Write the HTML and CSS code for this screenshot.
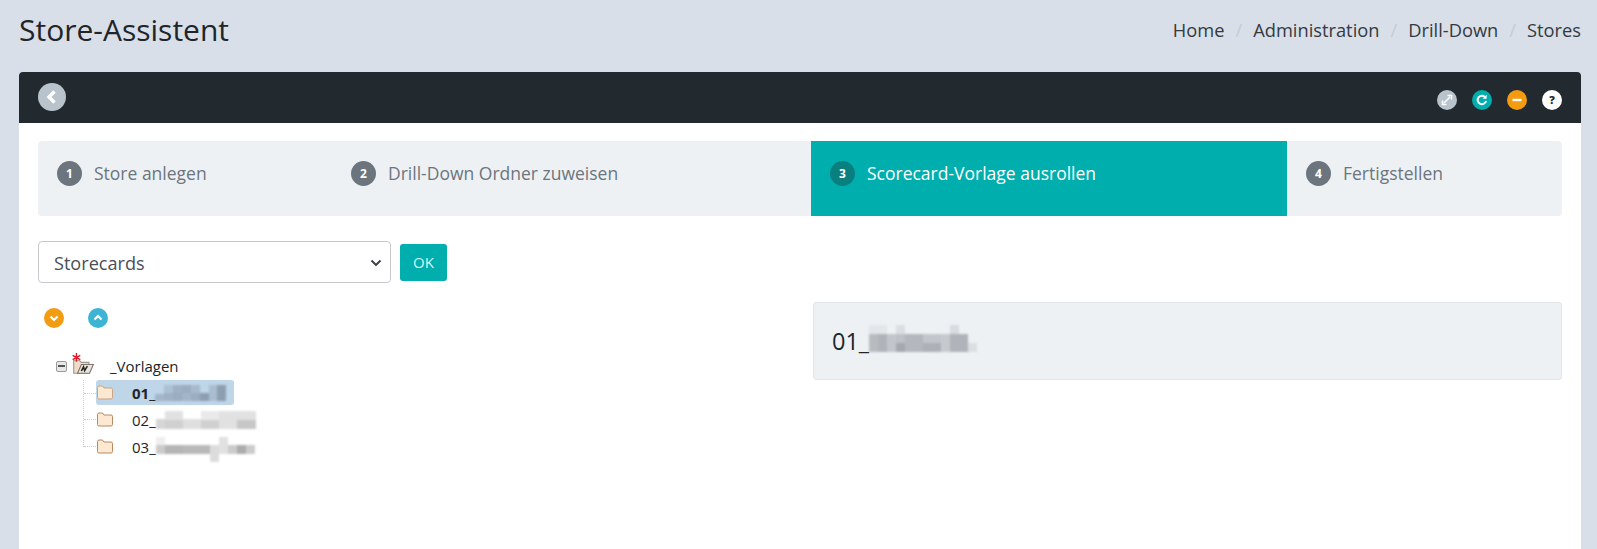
FILE: index.html
```html
<!DOCTYPE html>
<html lang="de">
<head>
<meta charset="utf-8">
<title>Store-Assistent</title>
<link rel="stylesheet" href="styles.css">
</head>
<body>
<header class="page-head">
  <h1 class="page-title">Store-Assistent</h1>
  <nav class="crumbs">
    <span>Home</span><i>/</i><span>Administration</span><i>/</i><span>Drill-Down</span><i>/</i><span>Stores</span>
  </nav>
</header>
<main class="card">
  <div class="card-bar">
    <span class="back">
      <svg viewBox="0 0 28 28" width="28" height="28"><path d="M16.500 8.500 11 14l5.500 5.500" fill="none" stroke="#fff" stroke-width="3.400"/></svg>
    </span>
    <div class="tools">
      <span class="tool t-grey"><svg viewBox="0 0 20 20" width="20" height="20"><path d="M7 13l6-6M10.500 5.500h4v4M5.500 10.500v4h4" fill="none" stroke="#fff" stroke-width="1.500"/></svg></span>
      <span class="tool t-teal"><svg viewBox="0 0 20 20" width="20" height="20"><path d="M13.500 7.500a4.300 4.300 0 1 0 .6 3.600" fill="none" stroke="#fff" stroke-width="2"/><path d="M14.600 4.800v4h-4z" fill="#fff"/></svg></span>
      <span class="tool t-orange"><svg viewBox="0 0 20 20" width="20" height="20"><rect x="5.500" y="8.800" width="9" height="2.400" fill="#fff"/></svg></span>
      <span class="tool t-white">?</span>
    </div>
  </div>
  <div class="card-body">
    <ol class="steps">
      <li class="step s1"><b>1</b>Store anlegen</li>
      <li class="step s2"><b>2</b>Drill-Down Ordner zuweisen</li>
      <li class="step s3 active"><b>3</b>Scorecard-Vorlage ausrollen</li>
      <li class="step s4"><b>4</b>Fertigstellen</li>
    </ol>
    <div class="picker">
      <div class="fake-select">Storecards
        <svg viewBox="0 0 12 8" width="12" height="8"><path d="M1.500 1.500 6 6l4.500-4.500" fill="none" stroke="#343a40" stroke-width="1.800"/></svg>
      </div>
      <button class="ok">OK</button>
    </div>
    <div class="columns">
      <section class="tree-col">
        <div class="round-btns">
          <span class="rb rb-orange"><svg viewBox="0 0 20 20" width="20" height="20"><path d="M6.500 8.500 10 12l3.500-3.500" fill="none" stroke="#fff" stroke-width="2.200"/></svg></span>
          <span class="rb rb-blue"><svg viewBox="0 0 20 20" width="20" height="20"><path d="M6.500 11.500 10 8l3.500 3.500" fill="none" stroke="#fff" stroke-width="2.200"/></svg></span>
        </div>
        <div class="tree">
          <div class="node root">
            <span class="minus"></span>
            <svg class="root-ico" viewBox="0 0 22 20" width="24" height="22">
              <path d="M2.500 6.500h5l2 2h7l-1 10h-13z" fill="#f0dcc8" stroke="#a09488"/>
              <path d="M6 18.500l3.500-8h11l-3.500 8z" fill="#ece6de" stroke="#7d746b"/>
              <path d="M9.500 16.500l2-4 1 3.500 2.500-4" fill="none" stroke="#222" stroke-width="1.400"/>
              <path d="M5 0v8M1.500 2l7 4M8.500 2l-7 4" stroke="#e0192a" stroke-width="1.300"/>
            </svg>
            <span class="root-label">_Vorlagen</span>
          </div>
          <div class="children">
            <div class="node selected">
              <svg class="folder" viewBox="0 0 18 15" width="18" height="15"><path d="M1.500 2.500q0-1.500 1.500-1.500h3.500l1.500 2h7q1.500 0 1.500 1.500v8q0 1.500-1.500 1.500H3q-1.500 0-1.500-1.500z" fill="#fde8d2" stroke="#c9a584"/></svg><span class="lbl bold">01_</span>
              <svg class="blur" viewBox="0 0 72 16" width="72" height="16"><g fill="#8b9bae"><rect x="0" y="9" width="9" height="7" opacity=".55"/><rect x="9" y="0" width="9" height="8" opacity=".35"/><rect x="9" y="8" width="9" height="8" opacity=".6"/><rect x="18" y="0" width="9" height="8" opacity=".6"/><rect x="18" y="8" width="9" height="8" opacity=".7"/><rect x="27" y="0" width="9" height="8" opacity=".7"/><rect x="27" y="8" width="9" height="8" opacity=".55"/><rect x="36" y="0" width="9" height="8" opacity=".45"/><rect x="36" y="8" width="9" height="8" opacity=".7"/><rect x="45" y="8" width="9" height="8" opacity=".95"/><rect x="54" y="0" width="8" height="16" opacity=".4"/><rect x="62" y="0" width="9" height="16" opacity=".95"/></g></svg>
            </div>
            <div class="node">
              <svg class="folder" viewBox="0 0 18 15" width="18" height="15"><path d="M1.500 2.500q0-1.500 1.500-1.500h3.500l1.500 2h7q1.500 0 1.500 1.500v8q0 1.500-1.500 1.500H3q-1.500 0-1.500-1.500z" fill="#fde8d2" stroke="#b58a63"/></svg><span class="lbl">02_</span>
              <svg class="blur" viewBox="0 0 100 18" width="100" height="18"><g fill="#c4c4c4"><rect x="0" y="8" width="9" height="10" opacity=".7"/><rect x="9" y="0" width="18" height="9" opacity=".5"/><rect x="9" y="9" width="18" height="9" opacity=".8"/><rect x="27" y="8" width="18" height="10" opacity=".55"/><rect x="45" y="0" width="18" height="9" opacity=".35"/><rect x="45" y="9" width="18" height="9" opacity=".8"/><rect x="63" y="0" width="18" height="18" opacity=".5"/><rect x="81" y="0" width="19" height="9" opacity=".5"/><rect x="81" y="9" width="19" height="9" opacity=".95"/></g></svg>
            </div>
            <div class="node">
              <svg class="folder" viewBox="0 0 18 15" width="18" height="15"><path d="M1.500 2.500q0-1.500 1.500-1.500h3.500l1.500 2h7q1.500 0 1.500 1.500v8q0 1.500-1.500 1.500H3q-1.500 0-1.500-1.500z" fill="#fde8d2" stroke="#b58a63"/></svg><span class="lbl">03_</span>
              <svg class="blur tall" viewBox="0 0 100 25" width="100" height="25"><g fill="#a8a8a8"><rect x="0" y="8" width="9" height="9" opacity=".6"/><rect x="0" y="0" width="9" height="8" opacity=".2"/><rect x="9" y="8" width="18" height="9" opacity=".85"/><rect x="27" y="8" width="27" height="9" opacity=".8"/><rect x="54" y="8" width="9" height="17" opacity=".4"/><rect x="63" y="0" width="9" height="17" opacity=".35"/><rect x="72" y="8" width="9" height="9" opacity=".6"/><rect x="81" y="8" width="9" height="9" opacity=".95"/><rect x="90" y="8" width="9" height="9" opacity=".6"/></g></svg>
            </div>
          </div>
        </div>
      </section>
      <aside class="info-col">
        <div class="well"><span>01_</span>
          <svg class="blur" viewBox="0 0 108 29" width="108" height="29"><g fill="#a5a9af"><rect x="0" y="9" width="9" height="18" opacity=".75"/><rect x="0" y="0" width="18" height="9" opacity=".15"/><rect x="9" y="9" width="9" height="18" opacity=".85"/><rect x="18" y="9" width="9" height="18" opacity=".6"/><rect x="27" y="0" width="9" height="9" opacity=".25"/><rect x="27" y="9" width="9" height="9" opacity=".65"/><rect x="27" y="18" width="9" height="9" opacity="1"/><rect x="36" y="9" width="18" height="18" opacity=".8"/><rect x="54" y="9" width="18" height="9" opacity=".6"/><rect x="54" y="18" width="18" height="9" opacity=".9"/><rect x="72" y="9" width="9" height="18" opacity=".55"/><rect x="81" y="0" width="9" height="9" opacity=".3"/><rect x="81" y="9" width="18" height="18" opacity=".85"/><rect x="99" y="18" width="9" height="9" opacity=".25"/></g></svg>
        </div>
      </aside>
    </div>
  </div>
</main>
</body>
</html>
```
FILE: styles.css
```css
* { box-sizing: border-box; }
html, body { height: 100%; }
body {
  margin: 0;
  background: #d8dfe8;
  color: #212529;
  font-family: "Open Sans", sans-serif;
  font-size: 16px;
  overflow: hidden;
}
.page-head {
  height: 72px;
  padding: 8px 16px 0 19px;
  display: flex;
  justify-content: space-between;
  align-items: flex-start;
}
.page-title {
  margin: 0;
  font-size: 30px;
  font-weight: 400;
  line-height: 44px;
}
.crumbs {
  display: flex;
  font-size: 18.300px;
  line-height: 44px;
  color: #343a40;
}
.crumbs i {
  font-style: normal;
  color: #c5ccd4;
  padding: 0 11px;
}
.card {
  margin: 0 16px 0 19px;
  background: #fff;
  border-radius: 4px 4px 0 0;
  height: 477px;
}
.card-bar {
  height: 51px;
  background: #22292f;
  border-radius: 4px 4px 0 0;
  padding: 11px 19px 0;
  display: flex;
  justify-content: space-between;
}
.back {
  width: 28px;
  height: 28px;
  border-radius: 50%;
  background: #b9c3cb;
  display: block;
}
.back svg { display: block; }
.tools {
  display: flex;
  gap: 15px;
  padding-top: 7px;
}
.tool {
  width: 20px;
  height: 20px;
  border-radius: 50%;
  display: block;
}
.tool svg { display: block; }
.t-grey { background: #b9c3cb; }
.t-teal { background: #00aeae; }
.t-orange { background: #f39c12; }
.t-white {
  background: #fff;
  color: #22292f;
  font-size: 11px;
  font-weight: 800;
  line-height: 20px;
  text-align: center;
}
.card-body { padding: 18px 19px 0; }
.steps {
  list-style: none;
  margin: 0;
  padding: 0;
  height: 75px;
  background: #eef1f4;
  border-radius: 4px;
  display: grid;
  grid-template-columns: 294px 479px 476px 1fr;
}
.step {
  padding: 20px 0 0 19px;
  display: flex;
  align-items: flex-start;
  font-size: 17.500px;
  line-height: 25px;
  color: #6c757d;
}
.step b {
  flex: none;
  width: 25px;
  height: 25px;
  margin-right: 12px;
  border-radius: 50%;
  background: #6c757d;
  color: #fff;
  font-size: 12px;
  font-weight: 700;
  text-align: center;
}
.step.active {
  background: #00aeae;
  color: #fff;
}
.step.active b { background: #0a7f80; }
.picker {
  margin-top: 25px;
  display: flex;
  align-items: center;
  gap: 9px;
}
.fake-select {
  width: 353px;
  height: 42px;
  padding: 2px 15px 0;
  display: flex;
  align-items: center;
  justify-content: space-between;
  border: 1px solid #c5c9ce;
  border-radius: 4px;
  background: #fff;
  font-size: 18.100px;
  color: #495057;
}
.fake-select svg { margin-right: -7px; }
.ok {
  width: 47px;
  height: 37px;
  border: 0;
  border-radius: 3px;
  background: #00aeae;
  color: #d8f5f5;
  font: 400 15px "Open Sans", sans-serif;
}
.columns {
  margin-top: 19px;
  display: grid;
  grid-template-columns: 775px 1fr;
}
.round-btns {
  display: flex;
  gap: 24px;
  padding: 6px 0 0 6px;
}
.rb {
  width: 20px;
  height: 20px;
  border-radius: 50%;
  display: block;
}
.rb svg { display: block; }
.rb-orange { background: #f39c12; }
.rb-blue { background: #3db4d4; }
.tree {
  margin: 25px 0 0 18px;
  font-size: 15px;
}
.node {
  display: flex;
  align-items: center;
  height: 27px;
}
.root { height: 26px; }
.minus {
  flex: none;
  width: 11px;
  height: 11px;
  margin-right: 4px;
  border: 1px solid #9a9a9a;
  border-radius: 2px;
  background: linear-gradient(#555, #555) center / 7px 2px no-repeat, #e8e8e8;
}
.root-ico { flex: none; margin-top: -5px; }
.root-label { margin-left: 15px; }
.children {
  margin-left: 27px;
  border-left: 1px dotted #ccc;
  height: 67px;
}
.children .node {
  width: 138px;
  margin-left: 12px;
  position: relative;
}
.children .node::before {
  content: "";
  position: absolute;
  left: -12px;
  top: 13px;
  width: 12px;
  border-top: 1px dotted #ccc;
}
.selected {
  height: 25px;
  margin-top: 1px;
  margin-bottom: 1px;
  background: #bfd5e8;
  border-radius: 3px;
}
.folder {
  flex: none;
  display: block;
  margin: 0 18px 0 0;
}
.lbl { flex: none; font-size: 15px; }
.lbl.bold { font-weight: 700; }
.node .blur { flex: none; }
.node .blur.tall { margin-top: 6px; }
.well {
  height: 78px;
  padding-left: 18px;
  display: flex;
  align-items: center;
  background: #eef1f4;
  border: 1px solid #e2e6ea;
  border-radius: 3px;
  font-size: 23.500px;
}
.well .blur { margin-top: -4px; }
.blur { filter: blur(1px); }
```
